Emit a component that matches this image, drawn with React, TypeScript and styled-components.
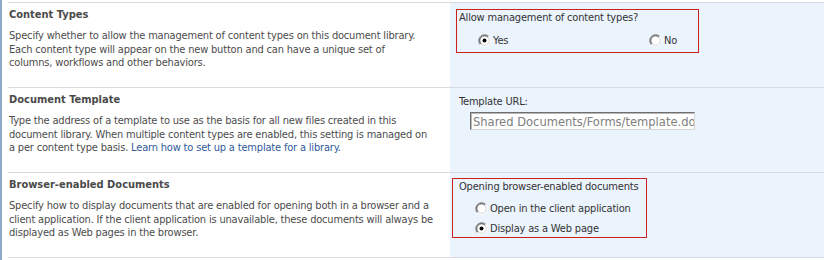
import * as React from "react";
import styled, { createGlobalStyle } from "styled-components";

const GlobalStyle = createGlobalStyle`
  html, body {
    margin: 0;
    padding: 0;
    background: #ffffff;
  }
  body {
    font-family: "DejaVu Sans Condensed", "Liberation Sans", sans-serif;
    font-size: 11px;
    color: #444444;
  }
`;

const Page = styled.div`
  width: 828px;
  height: 260px;
  box-sizing: border-box;
  border-left: 2px solid #8ea8c8;
  padding: 2px 4px 0 6px;
`;

const Section = styled.div<{ $last?: boolean }>`
  display: grid;
  grid-template-columns: 442px 1fr;
  height: ${(p) => (p.$last ? 86 : 85)}px;
  box-sizing: border-box;
  border-top: 1px solid #d8dadd;
  border-bottom: ${(p) => (p.$last ? "1px solid #d8dadd" : "none")};
`;

const Info = styled.div`
  padding: 5px 0 0 1px;
`;

const Title = styled.div`
  font-weight: bold;
  font-size: 11px;
  line-height: 14px;
  color: #4a4a4a;
`;

const Description = styled.div`
  margin-top: 7px;
  line-height: 13.5px;
  color: #4c4c4c;
  letter-spacing: -0.18px;
  white-space: nowrap;
`;

const Link = styled.a`
  color: #2f5a9c;
  text-decoration: none;
`;

const Control = styled.div`
  background: #ebf3fd;
  display: flex;
  flex-direction: column;
  align-items: flex-start;
`;

const Highlight = styled.div<{ $w: number; $h: number; $x: number; $y: number; $pad: number }>`
  box-sizing: border-box;
  width: ${(p) => p.$w}px;
  height: ${(p) => p.$h}px;
  margin: ${(p) => p.$y}px 0 0 ${(p) => p.$x}px;
  padding: 1px 0 0 ${(p) => p.$pad}px;
  border: 1px solid #cc1f1f;
`;

const Label = styled.div`
  line-height: 13px;
  color: #333333;
  letter-spacing: -0.18px;
`;

const Options = styled.div<{ $dir: "row" | "column"; $top: number }>`
  display: flex;
  flex-direction: ${(p) => p.$dir};
  margin-top: ${(p) => p.$top}px;
`;

const Option = styled.label<{ $w?: number; $indent: number }>`
  display: flex;
  align-items: center;
  height: 20px;
  width: ${(p) => (p.$w ? `${p.$w}px` : "auto")};
  padding-left: ${(p) => p.$indent}px;
  color: #333333;
  letter-spacing: -0.18px;
  gap: 2px;
`;

const FieldWrap = styled.div`
  padding: 7px 0 0 9px;
`;

const UrlInput = styled.input`
  display: block;
  box-sizing: border-box;
  width: 225px;
  height: 18px;
  margin: 4px 0 0 11px;
  padding: 0 0 0 2px;
  border: 1px solid;
  border-color: #6f6f6f #d4d4d4 #d4d4d4 #6f6f6f;
  box-shadow: inset 1px 1px 0 #b8b8b8;
  background: #ffffff;
  font-family: "DejaVu Sans Condensed", "Liberation Sans", sans-serif;
  font-size: 12.8px;
  color: #808080;
  outline: none;
`;

const Radio = ({ checked }: { checked?: boolean }) => (
  <svg width="13" height="13" viewBox="0 0 13 13">
    <circle cx="6.5" cy="6.5" r="5.5" fill="#ffffff" />
    <path d="M2.26 10.74 A6 6 0 0 1 10.74 2.26" fill="none" stroke="#8a8a8a" strokeWidth="1" />
    <path d="M10.74 2.26 A6 6 0 0 1 2.26 10.74" fill="none" stroke="#ffffff" strokeWidth="1" />
    <path d="M3.1 9.9 A4.8 4.8 0 0 1 9.9 3.1" fill="none" stroke="#3a3a3a" strokeWidth="1" />
    <path d="M9.9 3.1 A4.8 4.8 0 0 1 3.1 9.9" fill="none" stroke="#d6d3cc" strokeWidth="1" />
    {checked && <circle cx="6.5" cy="6.5" r="2" fill="#000000" />}
  </svg>
);

export default function App() {
  return (
    <>
      <GlobalStyle />
      <Page>
        <Section>
          <Info>
            <Title>Content Types</Title>
            <Description>
              Specify whether to allow the management of content types on this document library.
              <br />
              Each content type will appear on the new button and can have a unique set of
              <br />
              columns, workflows and other behaviors.
            </Description>
          </Info>
          <Control>
            <Highlight $w={243} $h={44} $x={6} $y={6} $pad={2}>
              <Label>Allow management of content types?</Label>
              <Options $dir="row" $top={6}>
                <Option $w={171} $indent={19}>
                  <Radio checked />
                  Yes
                </Option>
                <Option $indent={0}>
                  <Radio />
                  No
                </Option>
              </Options>
            </Highlight>
          </Control>
        </Section>

        <Section>
          <Info>
            <Title>Document Template</Title>
            <Description>
              Type the address of a template to use as the basis for all new files created in this
              <br />
              document library. When multiple content types are enabled, this setting is managed on
              <br />
              a per content type basis. <Link href="#">Learn how to set up a template for a library.</Link>
            </Description>
          </Info>
          <Control>
            <FieldWrap>
              <Label>Template URL:</Label>
              <UrlInput readOnly value="Shared Documents/Forms/template.doc" />
            </FieldWrap>
          </Control>
        </Section>

        <Section $last>
          <Info>
            <Title>Browser-enabled Documents</Title>
            <Description>
              Specify how to display documents that are enabled for opening both in a browser and a
              <br />
              client application. If the client application is unavailable, these documents will always be
              <br />
              displayed as Web pages in the browser.
            </Description>
          </Info>
          <Control>
            <Highlight $w={195} $h={60} $x={2} $y={5} $pad={6}>
              <Label>Opening browser-enabled documents</Label>
              <Options $dir="column" $top={5}>
                <Option $indent={16}>
                  <Radio />
                  Open in the client application
                </Option>
                <Option $indent={16}>
                  <Radio checked />
                  Display as a Web page
                </Option>
              </Options>
            </Highlight>
          </Control>
        </Section>
      </Page>
    </>
  );
}
